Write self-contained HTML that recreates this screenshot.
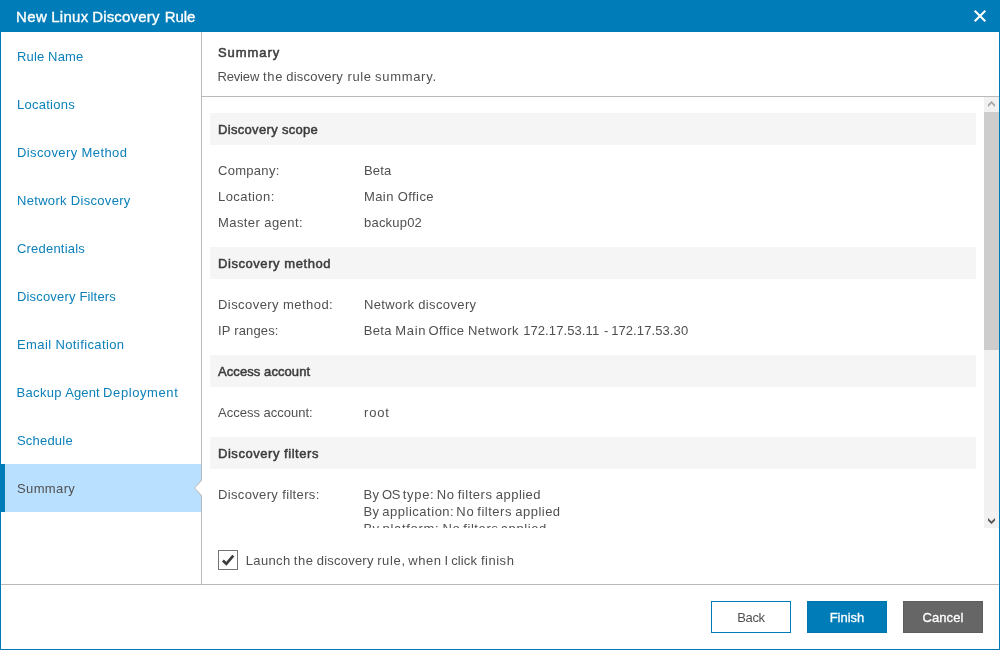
<!DOCTYPE html>
<html lang="en">
<head>
<meta charset="utf-8">
<title>New Linux Discovery Rule</title>
<style>
  * { box-sizing: border-box; margin: 0; padding: 0; }
  html, body { width: 1000px; height: 650px; overflow: hidden; background: #fff; }
  body { font-family: "Liberation Sans", sans-serif; font-size: 13px; color: #505050; position: relative; }
  .window { will-change: transform; position: absolute; left: 0; top: 0; width: 1000px; height: 650px; background: #fff; border: 1px solid #007db8; border-top: 0; }
  .titlebar { position: absolute; left: -1px; top: 0; width: 1000px; height: 32px; background: #007db8; color: #fff; }
  .titlebar .title { position: absolute; left: 16px; top: 0; height: 32px; line-height: 34px; font-size: 15px; white-space: nowrap; -webkit-text-stroke: 0.35px #fff; }
  .titlebar .close { position: absolute; left: 973px; top: 9px; width: 14px; height: 14px; }

  .sidebar { position: absolute; left: 0; top: 32px; width: 201px; height: 552px; border-right: 1px solid #b9b9b9; background: #fff; }
  .sidebar ul { list-style: none; }
  .sidebar li { position: relative; height: 48px; line-height: 48px; padding-left: 16px; color: #0b80ba; white-space: nowrap; }
  .sidebar li.active { background: #b9e0fe; color: #505050; border-left: 4px solid #007db8; padding-left: 12px; }
  .sidebar li.active .notch { position: absolute; left: 188px; top: 15px; width: 10px; height: 18px; overflow: visible; }

  .main { position: absolute; left: 201px; top: 32px; width: 797px; height: 552px; }
  .header { position: absolute; left: 0; top: 0; width: 797px; height: 65px; border-bottom: 1px solid #b9b9b9; }
  .header h1 { position: absolute; left: 16px; top: 11px; font-size: 13px; line-height: 18px; font-weight: normal; -webkit-text-stroke: 0.5px #3c3c3c; color: #3c3c3c; white-space: nowrap; }
  .header p { position: absolute; left: 16px; top: 35px; font-size: 13px; line-height: 18px; white-space: nowrap; }

  .scroll { position: absolute; left: 0; top: 65px; width: 782px; height: 431px; overflow: hidden; }
  .content { position: absolute; left: 8px; top: 16px; width: 766px; }
  .sec-h { height: 32px; line-height: 32px; background: #f5f5f5; padding-left: 8px; font-weight: normal; -webkit-text-stroke: 0.5px #3c3c3c; color: #3c3c3c; white-space: nowrap; }
  .sec-b { padding: 12px 0 12px 8px; }
  .row { display: flex; padding: 4px 0 5px; line-height: 17px; }
  .row .lbl { width: 146px; flex: none; white-space: nowrap; }
  .row .val { white-space: nowrap; }

  .vscroll { position: absolute; left: 782px; top: 65px; width: 15px; height: 431px; background: #f1f1f1; }
  .vscroll .thumb { position: absolute; left: 0; top: 15px; width: 15px; height: 238px; background: #cdcdcd; }
  .vscroll svg { position: absolute; left: 0; width: 15px; height: 15px; }

  .launch { position: absolute; left: 16px; top: 518px; height: 20px; line-height: 20px; white-space: nowrap; }
  .launch .cb { position: absolute; left: 0; top: 0; width: 20px; height: 20px; border: 1px solid #747474; background: #fff; }
  .launch .cb svg { position: absolute; left: 0; top: 0; width: 18px; height: 18px; }
  .launch .txt { position: absolute; left: 28px; top: 1px; }

  .footer { position: absolute; left: 0; top: 584px; width: 998px; height: 65px; border-top: 1px solid #b9b9b9; }
  .btn { position: absolute; top: 16px; width: 80px; height: 32px; line-height: 32px; text-align: center; font-size: 13px; white-space: nowrap; }
  .btn.back { left: 710px; border: 1px solid #007db8; background: #fff; color: #505050; line-height: 30px; }
  .btn.finish { left: 806px; background: #007db8; border: 1px solid #0076ae; line-height: 30px; color: #fff; -webkit-text-stroke: 0.3px #fff; }
  .btn.cancel { left: 902px; background: #666; border: 1px solid #5e5e5e; line-height: 30px; color: #fff; -webkit-text-stroke: 0.3px #fff; }
  :where(span[id]:not(.w)) { position: relative; top: 1px; }
  /*LS*/
  #s1 { letter-spacing: 0.15px; }
  #s2 { letter-spacing: 0.25px; }
  #s3 { letter-spacing: 0.39px; }
  #s4 { letter-spacing: 0.31px; }
  #s5 { letter-spacing: 0.2px; }
  #s6 { letter-spacing: 0.17px; }
  #s7 { letter-spacing: 0.39px; }
  #s9 { letter-spacing: 0.2px; }
  #s10 { letter-spacing: 0.37px; }
  #h1 { letter-spacing: 0.92px; }
  #c1 { letter-spacing: 0.32px; }
  #l1 { letter-spacing: 0.29px; }
  #v1 { letter-spacing: 0.16px; }
  #l2 { letter-spacing: 0.44px; }
  #v2 { letter-spacing: 0.4px; }
  #l3 { letter-spacing: 0.42px; }
  #v3 { letter-spacing: 0.21px; }
  #c2 { letter-spacing: 0.56px; }
  #l4 { letter-spacing: 0.44px; }
  #v4 { letter-spacing: 0.37px; }
  #l5 { letter-spacing: 0.16px; }
  #c3 { letter-spacing: 0.08px; }
  #l6 { letter-spacing: 0.0px; }
  #v6 { letter-spacing: 0.83px; }
  #c4 { letter-spacing: 0.54px; }
  #l7 { letter-spacing: 0.35px; }
  #b1 { letter-spacing: -0.33px; }
  #b2 { letter-spacing: 0.0px; }
  #b3 { letter-spacing: 0.08px; }
  /*ENDLS*/
  .w { white-space: pre; }
  /*WF*/
  #t-titlew0 { letter-spacing: 0.38px; margin-left: 0.00px; }
  #t-titlew1 { letter-spacing: 0.29px; margin-left: -0.53px; }
  #t-titlew2 { letter-spacing: 0.18px; margin-left: -0.85px; }
  #t-titlew3 { letter-spacing: -0.11px; margin-left: 0.85px; }
  #s8w0 { letter-spacing: 0.29px; margin-left: -0.40px; }
  #s8w1 { letter-spacing: 0.08px; margin-left: -0.34px; }
  #s8w2 { letter-spacing: 0.59px; margin-left: -0.27px; }
  #h2w0 { letter-spacing: -0.15px; margin-left: -0.58px; }
  #h2w1 { letter-spacing: 0.68px; margin-left: 0.43px; }
  #h2w2 { letter-spacing: 0.20px; margin-left: -1.16px; }
  #h2w3 { letter-spacing: 0.66px; margin-left: 0.64px; }
  #h2w4 { letter-spacing: 0.70px; margin-left: -1.04px; }
  #v5w0 { letter-spacing: 0.29px; margin-left: -0.22px; }
  #v5w1 { letter-spacing: 0.70px; margin-left: -0.36px; }
  #v5w2 { letter-spacing: 0.37px; margin-left: -2.01px; }
  #v5w3 { letter-spacing: 0.50px; margin-left: -0.52px; }
  #v5w4 { letter-spacing: 0.10px; margin-left: -0.11px; }
  #v5w5 { letter-spacing: 0.00px; margin-left: 1.04px; }
  #v5w6 { letter-spacing: 0.10px; margin-left: -0.85px; }
  #v7w0 { letter-spacing: 0.18px; margin-left: -0.44px; }
  #v7w1 { letter-spacing: -0.45px; margin-left: -0.87px; }
  #v7w2 { letter-spacing: 0.68px; margin-left: -0.25px; }
  #v7w3 { letter-spacing: 0.70px; margin-left: -1.96px; }
  #v7w4 { letter-spacing: 0.54px; margin-left: -1.47px; }
  #v7w5 { letter-spacing: 0.46px; margin-left: -0.84px; }
  #v8w0 { letter-spacing: 0.18px; margin-left: -0.44px; }
  #v8w1 { letter-spacing: 0.51px; margin-left: -0.56px; }
  #v8w2 { letter-spacing: 0.70px; margin-left: -2.00px; }
  #v8w3 { letter-spacing: 0.52px; margin-left: -1.46px; }
  #v8w4 { letter-spacing: 0.48px; margin-left: -0.82px; }
  #v9w0 { letter-spacing: 0.18px; margin-left: -0.44px; }
  #v9w1 { letter-spacing: 0.70px; margin-left: -0.35px; }
  #v9w2 { letter-spacing: 0.70px; margin-left: -1.31px; }
  #v9w3 { letter-spacing: 0.61px; margin-left: -1.64px; }
  #v9w4 { letter-spacing: 0.61px; margin-left: -2.02px; }
  #ltw0 { letter-spacing: 0.35px; margin-left: -0.24px; }
  #ltw1 { letter-spacing: 0.56px; margin-left: -0.70px; }
  #ltw2 { letter-spacing: 0.21px; margin-left: -0.93px; }
  #ltw3 { letter-spacing: 0.65px; margin-left: -0.32px; }
  #ltw4 { letter-spacing: 0.58px; margin-left: -1.78px; }
  #ltw5 { letter-spacing: 0.00px; margin-left: -1.28px; }
  #ltw6 { letter-spacing: 0.10px; margin-left: -0.48px; }
  #ltw7 { letter-spacing: 0.52px; margin-left: 0.16px; }
  /*ENDWF*/
</style>
</head>
<body>
<div class="window">
  <div class="titlebar">
    <span class="title" id="t-title"><span class="w" id="t-titlew0">New </span><span class="w" id="t-titlew1">Linux </span><span class="w" id="t-titlew2">Discovery </span><span class="w" id="t-titlew3">Rule</span></span>
    <svg class="close" viewBox="0 0 14 14"><path d="M1.7 1.7 L12.3 12.3 M12.3 1.7 L1.7 12.3" stroke="#fff" stroke-width="2" fill="none"/></svg>
  </div>

  <div class="sidebar">
    <ul>
      <li><span id="s1">Rule Name</span></li>
      <li><span id="s2">Locations</span></li>
      <li><span id="s3">Discovery Method</span></li>
      <li><span id="s4">Network Discovery</span></li>
      <li><span id="s5">Credentials</span></li>
      <li><span id="s6">Discovery Filters</span></li>
      <li><span id="s7">Email Notification</span></li>
      <li><span id="s8"><span class="w" id="s8w0">Backup </span><span class="w" id="s8w1">Agent </span><span class="w" id="s8w2">Deployment</span></span></li>
      <li><span id="s9">Schedule</span></li>
      <li class="active"><span id="s10">Summary</span><svg class="notch" viewBox="0 0 10 18"><path d="M1.5 9 L8.5 1.75 L9.5 1.75 L9.5 16.25 L8.5 16.25 Z" fill="#fff"/><path d="M8.5 1.4 L1.6 9 L8.5 16.6" fill="none" stroke="#b9b9b9" stroke-width="1"/></svg></li>
    </ul>
  </div>

  <div class="main">
    <div class="header">
      <h1><span id="h1">Summary</span></h1>
      <p><span id="h2"><span class="w" id="h2w0">Review </span><span class="w" id="h2w1">the </span><span class="w" id="h2w2">discovery </span><span class="w" id="h2w3">rule </span><span class="w" id="h2w4">summary.</span></span></p>
    </div>

    <div class="scroll">
      <div class="content">
        <div class="sec-h"><span id="c1">Discovery scope</span></div>
        <div class="sec-b">
          <div class="row"><span class="lbl"><span id="l1">Company:</span></span><span class="val"><span id="v1">Beta</span></span></div>
          <div class="row"><span class="lbl"><span id="l2">Location:</span></span><span class="val"><span id="v2">Main Office</span></span></div>
          <div class="row"><span class="lbl"><span id="l3">Master agent:</span></span><span class="val"><span id="v3">backup02</span></span></div>
        </div>
        <div class="sec-h"><span id="c2">Discovery method</span></div>
        <div class="sec-b">
          <div class="row"><span class="lbl"><span id="l4">Discovery method:</span></span><span class="val"><span id="v4">Network discovery</span></span></div>
          <div class="row"><span class="lbl"><span id="l5">IP ranges:</span></span><span class="val"><span id="v5"><span class="w" id="v5w0">Beta </span><span class="w" id="v5w1">Main </span><span class="w" id="v5w2">Office </span><span class="w" id="v5w3">Network </span><span class="w" id="v5w4">172.17.53.11 </span><span class="w" id="v5w5">- </span><span class="w" id="v5w6">172.17.53.30</span></span></span></div>
        </div>
        <div class="sec-h"><span id="c3">Access account</span></div>
        <div class="sec-b">
          <div class="row"><span class="lbl"><span id="l6">Access account:</span></span><span class="val"><span id="v6">root</span></span></div>
        </div>
        <div class="sec-h"><span id="c4">Discovery filters</span></div>
        <div class="sec-b">
          <div class="row"><span class="lbl"><span id="l7">Discovery filters:</span></span><span class="val"><span id="v7"><span class="w" id="v7w0">By </span><span class="w" id="v7w1">OS </span><span class="w" id="v7w2">type: </span><span class="w" id="v7w3">No </span><span class="w" id="v7w4">filters </span><span class="w" id="v7w5">applied</span></span><br><span id="v8"><span class="w" id="v8w0">By </span><span class="w" id="v8w1">application: </span><span class="w" id="v8w2">No </span><span class="w" id="v8w3">filters </span><span class="w" id="v8w4">applied</span></span><br><span id="v9"><span class="w" id="v9w0">By </span><span class="w" id="v9w1">platform: </span><span class="w" id="v9w2">No </span><span class="w" id="v9w3">filters </span><span class="w" id="v9w4">applied</span></span></span></div>
        </div>
      </div>
    </div>

    <div class="vscroll">
      <svg style="top:0" viewBox="0 0 15 15"><path d="M4 10 L7.5 6.5 L11 10 L11 7.5 L7.5 4 L4 7.5 Z" fill="#a6a6a6"/></svg>
      <div class="thumb"></div>
      <svg style="top:416px" viewBox="0 0 15 15"><path d="M4 5 L7.5 8.5 L11 5 L11 7.5 L7.5 11 L4 7.5 Z" fill="#505050"/></svg>
    </div>

    <div class="launch">
      <span class="cb"><svg viewBox="0 0 18 18"><path d="M3.9 9.6 L7.3 12.8 L14.3 4.7" stroke="#3c3c3c" stroke-width="2.7" fill="none"/></svg></span>
      <span class="txt" id="lt"><span class="w" id="ltw0">Launch </span><span class="w" id="ltw1">the </span><span class="w" id="ltw2">discovery </span><span class="w" id="ltw3">rule, </span><span class="w" id="ltw4">when </span><span class="w" id="ltw5">I </span><span class="w" id="ltw6">click </span><span class="w" id="ltw7">finish</span></span>
    </div>
  </div>

  <div class="footer">
    <div class="btn back"><span id="b1">Back</span></div>
    <div class="btn finish"><span id="b2">Finish</span></div>
    <div class="btn cancel"><span id="b3">Cancel</span></div>
  </div>
</div>
</body>
</html>
